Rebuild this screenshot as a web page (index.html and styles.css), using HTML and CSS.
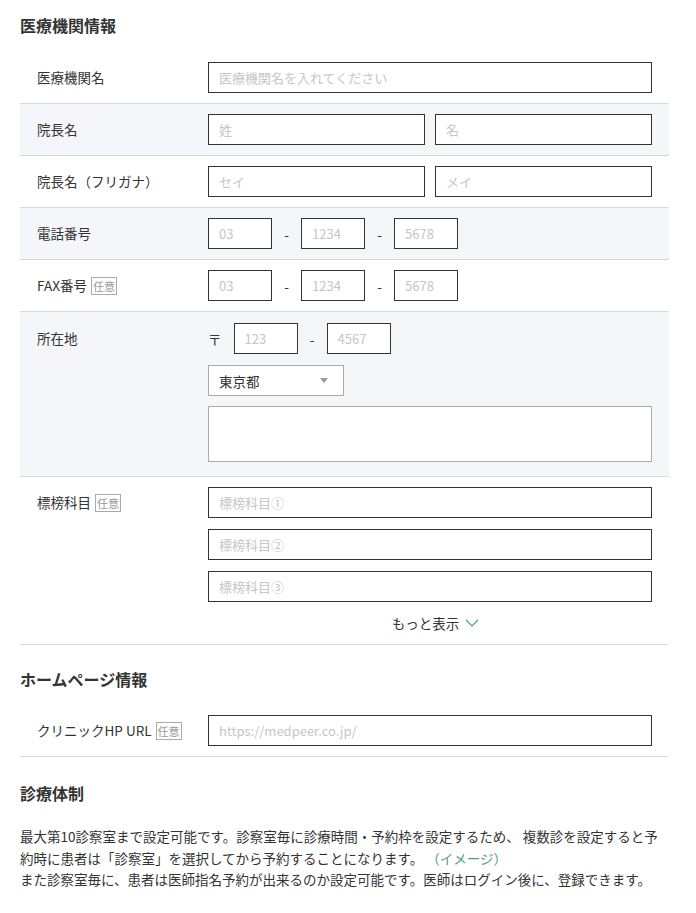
FILE: index.html
```html
<!DOCTYPE html>
<html lang="ja">
<head>
<meta charset="utf-8">
<title>医療機関情報</title>
<link rel="stylesheet" href="styles.css">
</head>
<body>
<div class="page">
  <section class="section">
    <h2 class="section-title">医療機関情報</h2>
    <div class="row">
      <div class="label">医療機関名</div>
      <div class="field"><input class="input input--full" placeholder="医療機関名を入れてください"></div>
    </div>
    <div class="row row--alt">
      <div class="label">院長名</div>
      <div class="field field--split">
        <input class="input" placeholder="姓">
        <input class="input" placeholder="名">
      </div>
    </div>
    <div class="row">
      <div class="label">院長名（フリガナ）</div>
      <div class="field field--split">
        <input class="input" placeholder="セイ">
        <input class="input" placeholder="メイ">
      </div>
    </div>
    <div class="row row--alt">
      <div class="label">電話番号</div>
      <div class="field field--inline">
        <input class="input input--small" placeholder="03">
        <span class="dash">-</span>
        <input class="input input--small" placeholder="1234">
        <span class="dash">-</span>
        <input class="input input--small" placeholder="5678">
      </div>
    </div>
    <div class="row">
      <div class="label">FAX番号<span class="badge">任意</span></div>
      <div class="field field--inline">
        <input class="input input--small" placeholder="03">
        <span class="dash">-</span>
        <input class="input input--small" placeholder="1234">
        <span class="dash">-</span>
        <input class="input input--small" placeholder="5678">
      </div>
    </div>
    <div class="row row--alt row--address">
      <div class="label">所在地</div>
      <div class="field field--stack">
        <div class="field--inline postal">
          <span class="postal-mark">〒</span>
          <input class="input input--small" placeholder="123">
          <span class="dash">-</span>
          <input class="input input--small" placeholder="4567">
        </div>
        <div class="select-wrap">
          <select class="select">
            <option>東京都</option>
          </select>
          <span class="select-arrow"></span>
        </div>
        <textarea class="textarea"></textarea>
      </div>
    </div>
    <div class="row row--last">
      <div class="label">標榜科目<span class="badge">任意</span></div>
      <div class="field field--list">
        <input class="input input--full" placeholder="標榜科目①">
        <input class="input input--full" placeholder="標榜科目②">
        <input class="input input--full" placeholder="標榜科目③">
        <div class="more">もっと表示<svg class="chevron" width="14" height="8" viewBox="0 0 14 8"><path d="M1 1 L7 7 L13 1" fill="none" stroke="#4f9e88" stroke-width="1.2"/></svg></div>
      </div>
    </div>
  </section>

  <section class="section section--next">
    <h2 class="section-title">ホームページ情報</h2>
    <div class="row">
      <div class="label">クリニックHP URL<span class="badge">任意</span></div>
      <div class="field"><input class="input input--full" placeholder="https://medpeer.co.jp/"></div>
    </div>
  </section>

  <section class="section section--system">
    <h2 class="section-title">診療体制</h2>
    <p class="note">最大第10診察室まで設定可能です。診察室毎に診療時間・予約枠を設定するため、 複数診を設定すると予約時に患者は「診察室」を選択してから予約することになります。 <a class="link" href="#">（イメージ）</a><br>また診察室毎に、患者は医師指名予約が出来るのか設定可能です。医師はログイン後に、登録できます。</p>
  </section>
</div>
</body>
</html>
```

FILE: styles.css
```css
* { box-sizing: border-box; }

body {
  margin: 0;
  background: #fff;
  color: #333;
  font-family: "Noto Sans CJK JP", "Noto Sans", sans-serif;
  font-size: 13.5px;
  text-spacing-trim: space-all;
}

.page {
  width: 649px;
  margin-left: 20px;
}

.section-title {
  margin: 0;
  padding: 13px 0 15px;
  font-size: 16px;
  line-height: 24px;
  font-weight: bold;
  color: #333;
}

.section--next .section-title {
  padding: 22px 0 14px;
}

.section--system .section-title {
  padding: 24px 0 21px;
}

.row {
  display: grid;
  grid-template-columns: 171px 444px;
  padding: 10px 17px;
  border-bottom: 1px solid #d9d9d9;
}

.row--alt {
  background: #f5f6fa;
}

.row--address {
  padding-top: 11px;
}

.label {
  display: flex;
  align-items: center;
  align-self: start;
  height: 31px;
  line-height: 31px;
  color: #333;
  white-space: nowrap;
}

.badge {
  display: inline-block;
  margin-left: 4px;
  padding: 0 1px;
  border: 1px solid #aaa;
  color: #999;
  font-size: 11px;
  line-height: 16px;
}

.field--split {
  display: grid;
  grid-template-columns: 1fr 1fr;
  gap: 10px;
}

.field--inline {
  display: flex;
  align-items: center;
  gap: 12px;
}

.field--stack {
  display: flex;
  flex-direction: column;
  align-items: flex-start;
  gap: 10px;
}

.postal {
  margin-bottom: 1px;
}

.field--list {
  display: flex;
  flex-direction: column;
  gap: 11px;
}

.input {
  display: block;
  width: 100%;
  height: 31px;
  margin: 0;
  padding: 0 10px;
  border: 1px solid #333;
  border-radius: 0;
  background: #fff;
  color: #333;
  font-family: inherit;
  font-size: 13px;
  outline: none;
}

.input::placeholder {
  color: #c6c6c6;
}

.input--small {
  width: 64px;
}

.dash {
  width: 5px;
  color: #333;
  text-align: center;
}

.postal-mark {
  width: 13.5px;
  color: #333;
}

.select-wrap {
  position: relative;
  width: 136px;
  height: 31px;
}

.select {
  display: block;
  width: 100%;
  height: 31px;
  margin: 0;
  padding: 0 10px;
  border: 1px solid #aaa;
  border-radius: 0;
  background: #fff;
  color: #333;
  font-family: inherit;
  font-size: 13.5px;
  appearance: none;
  -webkit-appearance: none;
  outline: none;
}

.select-arrow {
  position: absolute;
  top: 13px;
  right: 16px;
  width: 0;
  height: 0;
  border-left: 4px solid transparent;
  border-right: 4px solid transparent;
  border-top: 5px solid #999;
}

.textarea {
  display: block;
  width: 100%;
  height: 56px;
  margin: 0 0 4px;
  border: 1px solid #aaa;
  border-radius: 0;
  background: #fff;
  resize: none;
  outline: none;
}

.row--last {
  padding-bottom: 10px;
}

.more {
  display: flex;
  justify-content: center;
  align-items: center;
  gap: 6px;
  margin-top: -1px;
  padding-left: 11px;
  line-height: 22px;
  color: #333;
}

.chevron {
  display: block;
}

.note {
  margin: 0;
  font-size: 13.5px;
  line-height: 21.5px;
  color: #333;
}

.link {
  color: #4f9e88;
  text-decoration: none;
}
```
